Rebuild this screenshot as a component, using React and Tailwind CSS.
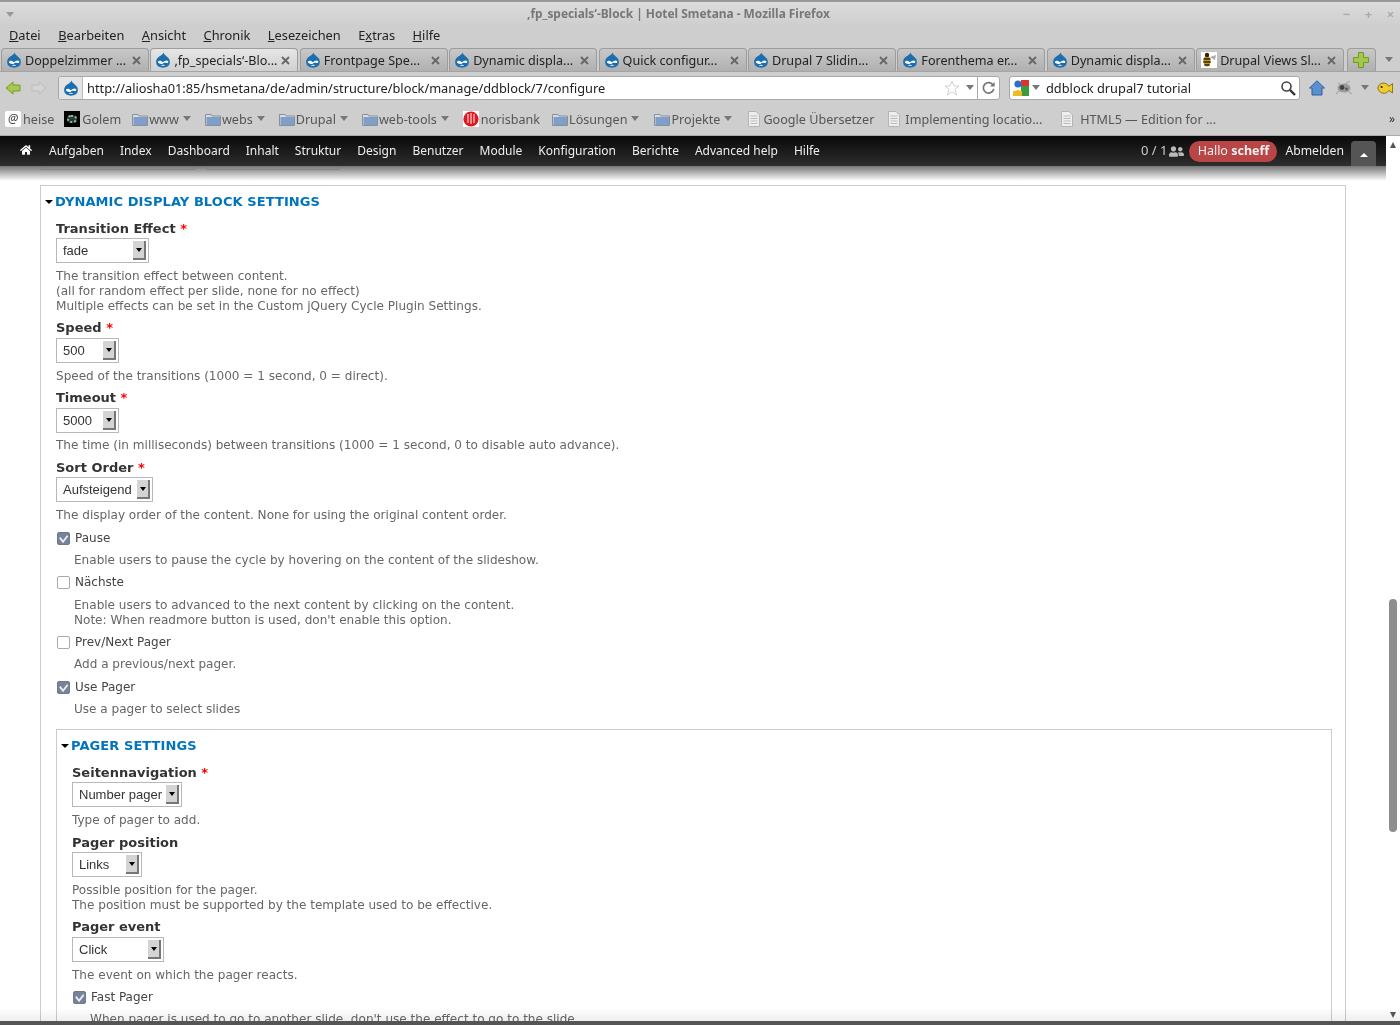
import { FaHome, FaUserFriends } from "react-icons/fa";

const Drop = ({ className = "" }) => (
  <svg viewBox="0 0 16 16" className={`w-4 h-4 shrink-0 ${className}`}>
    <path d="M8.6 0.5C9 3 12 4 13.8 6.6C15.6 9.2 15 13 12.4 14.6C10 16.1 6 16.1 3.6 14.6C1 13 .4 9.4 2 6.8C3.8 4 7.6 3.4 8.6 .5Z" fill="#1b6fb0" />
    <path d="M3 9.6C4.6 8 6.4 9 8 10.2C9.6 9 11.6 7.6 13.2 9.2C13.6 10.6 12.6 11 11.6 11C10 11 9.4 10.4 8 11.4C6.6 12.6 5 11.6 3.8 11.2C3 10.8 2.8 10.2 3 9.6Z" fill="#fff" />
    <path d="M5.8 13.2C7 12.5 9 12.5 10.2 13.2C9 13.9 7 13.9 5.8 13.2Z" fill="#fff" />
  </svg>
);

const Bee = () => (
  <div className="w-4 h-4 shrink-0 bg-white">
    <svg viewBox="0 0 16 16" className="w-4 h-4">
      <ellipse cx="6" cy="9" rx="3.6" ry="5.6" fill="#c99a1c" />
      <path d="M2.6 7H9.4M2.4 10H9.6M3.4 13H8.6" stroke="#2b2410" strokeWidth="1.4" />
      <circle cx="6" cy="3" r="2.2" fill="#2b2410" />
      <path d="M9 5L15 3L14 8Z" fill="#aaa" />
    </svg>
  </div>
);

const Folder = () => (
  <svg viewBox="0 0 16 16" className="w-4 h-4 shrink-0">
    <path d="M.5 3.5H6L7 5H15.5V14.5H.5Z" fill="#d8dde4" stroke="#8a8f96" />
    <rect x="1.5" y="6" width="13.5" height="8" fill="#7d9fc9" />
  </svg>
);

const Page = () => (
  <svg viewBox="0 0 16 16" className="w-4 h-4 shrink-0">
    <path d="M2.5 .5H10L13.5 4V15.5H2.5Z" fill="#eee" stroke="#b4b4b4" />
    <path d="M4.5 5H11.5M4.5 7.5H11.5M4.5 10H11.5M4.5 12.5H11.5" stroke="#bcbcbc" />
  </svg>
);

const Caret = ({ className = "" }) => (
  <span className={`w-0 h-0 border-x-[4px] border-x-transparent border-t-[5px] border-t-[#777] ${className}`} />
);

const tabs = [
  { title: "Doppelzimmer ..." },
  { title: ",fp_specials‘-Blo...", active: true },
  { title: "Frontpage Spe..." },
  { title: "Dynamic displa..." },
  { title: "Quick configur..." },
  { title: "Drupal 7 Slidin..." },
  { title: "Forenthema er..." },
  { title: "Dynamic displa..." },
  { title: "Drupal Views Sl...", bee: true },
];

const menus = [
  ["", "D", "atei"],
  ["", "B", "earbeiten"],
  ["", "A", "nsicht"],
  ["", "C", "hronik"],
  ["", "L", "esezeichen"],
  ["E", "x", "tras"],
  ["", "H", "ilfe"],
];

const adminLinks = ["Aufgaben", "Index", "Dashboard", "Inhalt", "Struktur", "Design", "Benutzer", "Module", "Konfiguration", "Berichte", "Advanced help", "Hilfe"];

const Bookmark = ({ icon, label, arrow, className = "" }) => (
  <div className={`flex items-center ${className}`}>
    {icon}
    <span className="pt-[2px]">{label}</span>
    {arrow && <Caret className="ml-[3px]" />}
  </div>
);

const Req = () => <span className="text-[#f00] font-bold"> *</span>;

const Select = ({ value, width }) => (
  <div className={`h-[25px] border border-[#b8b8b8] bg-white flex items-center justify-between pl-[6px] pr-[2px] font-['Liberation_Sans',sans-serif] text-[13px] text-[#333] ${width}`}>
    <span>{value}</span>
    <div className="w-[13px] h-[19px] bg-[#d4d4d4] border-r-2 border-b-2 border-[#777] flex items-center justify-center">
      <span className="w-0 h-0 border-x-[3.5px] border-x-transparent border-t-[4px] border-t-black" />
    </div>
  </div>
);

const Field = ({ label, required, value, width, desc, className = "", selectGap = "mt-0", descGap = "mt-[6px]" }) => (
  <div className={className}>
    <div className="h-[20px] leading-[22px] font-bold text-[13px] text-[#333]">
      {label}
      {required && <Req />}
    </div>
    <div className={selectGap}>
      <Select value={value} width={width} />
    </div>
    <div className={`${descGap} leading-[15px]`}>
      {desc.map((line) => (
        <div key={line}>{line}</div>
      ))}
    </div>
  </div>
);

const Check = ({ label, checked, desc, className = "", descGap = "mt-[7px]" }) => (
  <div className={className}>
    <div className="flex items-start h-[16px] gap-[5px] pl-px">
      <div className={`mt-[2px] w-[13px] h-[13px] rounded-[2px] border flex items-center justify-center ${checked ? "bg-[#78839a] border-[#6f7a8e]" : "bg-white border-[#aaa]"}`}>
        {checked && (
          <svg viewBox="0 0 12 12" className="w-3 h-3">
            <path d="M2 4.5L5.5 9L10.5 2.5" fill="none" stroke="#eeeeee" strokeWidth="2" />
          </svg>
        )}
      </div>
      <span className="text-[#444] text-[12px] leading-[16px]">{label}</span>
    </div>
    <div className={`pl-[18px] ${descGap} leading-[15px]`}>
      {desc.map((line) => (
        <div key={line}>{line}</div>
      ))}
    </div>
  </div>
);

const Legend = ({ children, className = "" }) => (
  <div className={`flex items-center gap-[2px] font-bold text-[#0074bd] text-[13px] tracking-[0.08px] uppercase ${className}`}>
    <span className="w-0 h-0 border-x-[4px] border-x-transparent border-t-[4px] border-t-black" />
    {children}
  </div>
);

export default function App() {
  return (
    <div className="w-[1400px] h-[1025px] flex flex-col overflow-hidden bg-white font-['Noto_Sans',sans-serif]">
      <div className="bg-[#cecece] shrink-0">
        {/* title bar */}
        <div className="h-[26px] border-t-2 border-[#999] bg-gradient-to-b from-[#dcdcdc] to-[#cecece] flex items-center relative">
          <span className="ml-[6px] w-0 h-0 border-x-[4px] border-x-transparent border-t-[5px] border-t-[#999]" />
          <span className="ml-[513px] text-[11.9px] font-bold text-[#777]">,fp_specials‘-Block | Hotel Smetana - Mozilla Firefox</span>
          <div className="ml-auto mr-[5px] flex gap-[13px] text-[#aaa] text-[13px] font-bold leading-none">
            <span className="w-[9px] text-center">−</span>
            <span className="w-[9px] text-center">+</span>
            <span className="w-[9px] text-center">×</span>
          </div>
        </div>

        {/* menu */}
        <div className="h-[20px] flex items-center pl-[9px] gap-[17.5px] text-[12.8px] text-[#222]">
          {menus.map(([before, key, after]) => (
            <span key={key + after}>
              {before}
              <span className="underline">{key}</span>
              {after}
            </span>
          ))}
        </div>

        {/* tabs */}
        <div className="h-[24px] mt-[2px] flex items-end pl-px border-b border-[#a4a4a4]">
          {tabs.map((tab, i) => (
            <div
              key={i}
              className={`w-[148px] mr-[1.4px] h-[23px] flex items-center pl-[4px] pr-[7px] gap-[3px] rounded-t-[4px] border border-b-0 border-[#9c9c9c] text-[12.6px] text-[#222] ${tab.active ? "bg-gradient-to-b from-[#e6e6e6] to-[#d0d0d0]" : "bg-gradient-to-b from-[#c8c8c8] to-[#b0b0b0]"}`}
            >
              {tab.bee ? <Bee /> : <Drop />}
              <span className="flex-1 whitespace-nowrap pt-[2px]">{tab.title}</span>
              <svg viewBox="0 0 9 9" className="w-[9px] h-[9px] shrink-0">
                <path d="M1 1L8 8M8 1L1 8" stroke="#666" strokeWidth="1.8" />
              </svg>
            </div>
          ))}
          <div className="w-[29px] h-[23px] ml-px flex items-center justify-center rounded-t-[4px] border border-b-0 border-[#9c9c9c] bg-gradient-to-b from-[#c8c8c8] to-[#b0b0b0]">
            <svg viewBox="0 0 16 16" className="w-4 h-4">
              <path d="M5.5 .5H10.5V5.5H15.5V10.5H10.5V15.5H5.5V10.5H.5V5.5H5.5Z" fill="#a3c94a" stroke="#6f9a22" />
            </svg>
          </div>
          <Caret className="ml-[9px] mb-[9px]" />
        </div>

        {/* nav bar */}
        <div className="h-[30px] flex items-center bg-[#cecece] pt-px">
          <svg viewBox="0 0 16 16" className="w-4 h-4 ml-[5px]">
            <path d="M1 8L8 2V5H15V11H8V14Z" fill="#a8c84c" stroke="#7a9a2a" />
          </svg>
          <svg viewBox="0 0 16 16" className="w-4 h-4 ml-[10px]">
            <path d="M15 8L8 2V5H1V11H8V14Z" fill="#d4d4d4" stroke="#bcbcbc" />
          </svg>
          <div className="ml-[11px] w-[942px] h-[24px] flex items-center bg-white border border-[#a8a8a8] rounded-[3px] text-[12.8px] text-[#222]">
            <div className="w-[24px] h-full flex items-center justify-center bg-[#e4e4e4] border-r border-[#bbb] rounded-l-[3px]">
              <Drop />
            </div>
            <span className="ml-[4px] pt-[2px]">http://aliosha01:85/hsmetana/de/admin/structure/block/manage/ddblock/7/configure</span>
            <svg viewBox="0 0 16 16" className="w-4 h-4 ml-auto">
              <path d="M8 1L10 6H15L11 9.4L12.6 15L8 11.6L3.4 15L5 9.4L1 6H6Z" fill="#fff" stroke="#d0d0d0" />
            </svg>
            <Caret className="ml-[6px]" />
            <div className="ml-[3px] w-[22px] h-full border-l border-[#aaa] flex items-center justify-center">
              <svg viewBox="0 0 16 16" className="w-[15px] h-[15px]">
                <path d="M13 5.6A5.6 5.6 0 1 0 13.6 9.5" fill="none" stroke="#777" strokeWidth="1.8" />
                <path d="M14.6 2V7H9.6Z" fill="#777" />
              </svg>
            </div>
          </div>
          <div className="ml-[9px] w-[291px] h-[24px] flex items-center bg-white border border-[#a8a8a8] rounded-[3px] text-[12.8px] text-[#222] pl-[3px] pr-[3px]">
            <svg viewBox="0 0 16 16" className="w-4 h-4">
              <rect x="0" y="0" width="16" height="16" fill="#fff" />
              <path d="M8 0H16V6H8Z" fill="#d9352a" />
              <path d="M8 6H16V16H8Z" fill="#3a9b3f" />
              <path d="M0 11H9V16H0Z" fill="#eebb22" />
              <circle cx="5" cy="4" r="3.6" fill="#2f6fc9" />
              <circle cx="5" cy="13" r="3" fill="#eebb22" />
            </svg>
            <Caret className="ml-[3px]" />
            <span className="ml-[6px] pt-[2px]">ddblock drupal7 tutorial</span>
            <svg viewBox="0 0 16 16" className="w-4 h-4 ml-auto">
              <circle cx="6.5" cy="6.5" r="4.5" fill="#fff" stroke="#444" strokeWidth="1.6" />
              <path d="M10 10L15 15" stroke="#333" strokeWidth="2.4" />
            </svg>
          </div>
          <svg viewBox="0 0 16 16" className="w-4 h-4 ml-[9px]">
            <path d="M8 .8L15.5 8H13V15H3V8H.5Z" fill="#5a8fd0" stroke="#2f5f9e" />
          </svg>
          <svg viewBox="0 0 16 16" className="w-4 h-4 ml-[11px]">
            <ellipse cx="8" cy="8" rx="6.5" ry="4.6" fill="#9a9a9a" />
            <circle cx="6" cy="7.5" r="2.4" fill="#444" />
            <circle cx="10.5" cy="9" r="1.4" fill="#555" />
            <path d="M9 4L14 1M12 11L16 14M3 11L0 14M2 3L5 5" stroke="#aaa" strokeWidth="1.3" />
          </svg>
          <Caret className="ml-[9px]" />
          <svg viewBox="0 0 16 16" className="w-4 h-4 ml-[8px]">
            <path d="M.8 8C2 2 9.5 1.6 11.8 6.4L15.6 3.6V13L11.8 10.4C9.5 15 2 14 .8 8Z" fill="#f0cd2c" stroke="#8a7310" />
            <circle cx="4.6" cy="7" r="1.1" fill="#222" />
          </svg>
        </div>

        {/* bookmarks */}
        <div className="h-[34px] flex items-center pl-[5px] text-[12.6px] text-[#555] border-b border-[#aaa] pt-px">
          <Bookmark
            className="gap-[2px]"
            label="heise"
            icon={
              <div className="w-4 h-4 bg-white flex items-center justify-center italic text-[12px] leading-none text-[#444] rounded-[2px]">@</div>
            }
          />
          <Bookmark
            className="ml-[10px] gap-[2px]"
            label="Golem"
            icon={
              <div className="w-4 h-4 bg-black flex items-center justify-center">
                <div className="w-[10px] h-[8px] rounded-full border-2 border-dotted border-[#6fc9a0] bg-[#333]" />
              </div>
            }
          />
          <Bookmark className="ml-[11px] gap-px" label="www" arrow icon={<Folder />} />
          <Bookmark className="ml-[14px] gap-px" label="webs" arrow icon={<Folder />} />
          <Bookmark className="ml-[14px] gap-px" label="Drupal" arrow icon={<Folder />} />
          <Bookmark className="ml-[14px] gap-px" label="web-tools" arrow icon={<Folder />} />
          <Bookmark
            className="ml-[14px] gap-[2px]"
            label="norisbank"
            icon={
              <div className="w-4 h-4 bg-white">
                <svg viewBox="0 0 16 16" className="w-4 h-4">
                  <circle cx="8" cy="8" r="7.6" fill="#e0181e" />
                  <path d="M5 3V12M8 2V13M11 3V12" stroke="#fff" strokeWidth="1" />
                </svg>
              </div>
            }
          />
          <Bookmark className="ml-[12px] gap-px" label="Lösungen" arrow icon={<Folder />} />
          <Bookmark className="ml-[15px] gap-px" label="Projekte" arrow icon={<Folder />} />
          <Bookmark className="ml-[14px] gap-px" label="Google Übersetzer" icon={<Page />} />
          <Bookmark className="ml-[12px] gap-[3px]" label="Implementing locatio..." icon={<Page />} />
          <Bookmark className="ml-[17px] gap-[5px]" label="HTML5 — Edition for ..." icon={<Page />} />
          <span className="ml-auto mr-[5px] text-[#333] text-[12px]">»</span>
        </div>
      </div>

      <div className="flex-1 min-h-0 flex">
        <div className="flex-1 min-w-0 flex flex-col">
          {/* admin toolbar */}
          <div className="h-[30px] shrink-0 flex bg-gradient-to-b from-[#0a0a0a] to-[#2e2e2e] text-[#eee] text-[12px] pl-[20px] pr-[10px] pt-[5px]">
            <FaHome className="w-[12px] h-[12px] text-white mt-[3px]" />
            <div className="ml-[17px] flex gap-[16px] h-[20px] items-center">
              {adminLinks.map((link, i) => (
                <span key={i}>{link}</span>
              ))}
            </div>
            <div className="ml-auto flex h-[25px] items-start">
              <div className="flex items-center h-[20px] text-[13px]">
                <span className="text-[#ccc]">0 / 1</span>
                <FaUserFriends className="ml-[2px] w-[15px] h-[15px] text-[#bbb]" />
              </div>
              <div className="ml-[5px] h-[21px] w-[88px] justify-center rounded-full bg-[#b84646] flex items-center whitespace-pre text-[12.5px]">
                Hallo <b>scheff</b>
              </div>
              <span className="ml-[8px] h-[20px] flex items-center text-[12.2px]">Abmelden</span>
              <div className="ml-[7px] w-[25px] h-[25px] bg-[#555] rounded-t-[4px] flex items-center justify-center">
                <span className="w-0 h-0 mt-[3px] border-x-[4px] border-x-transparent border-b-[4px] border-b-white" />
              </div>
            </div>
          </div>

          {/* page content */}
          <div className="flex-1 min-h-0 relative overflow-hidden px-[40px] font-['DejaVu_Sans',sans-serif] text-[12.05px] text-[#666]">
            <div className="flex gap-[11px] h-[4px] mb-[15px]">
              <div className="w-[155px] border border-t-0 border-[#bbb]" />
              <div className="w-[134px] border border-t-0 border-[#bbb]" />
            </div>

            <div className="border border-[#ccc] pl-[15px] pr-[13px] pt-[7px]">
              <Legend className="-ml-[11px] h-[18px]">Dynamic display block settings</Legend>
              <Field className="mt-[7px]" label="Transition Effect" required value="fade" width="w-[93px]" desc={["The transition effect between content.", "(all for random effect per slide, none for no effect)", "Multiple effects can be set in the Custom jQuery Cycle Plugin Settings."]} />
              <Field className="mt-[3px]" selectGap="mt-px" label="Speed" required value="500" width="w-[63px]" desc={["Speed of the transitions (1000 = 1 second, 0 = direct)."]} />
              <Field className="mt-[3px]" selectGap="mt-px" descGap="mt-[5px]" label="Timeout" required value="5000" width="w-[63px]" desc={["The time (in milliseconds) between transitions (1000 = 1 second, 0 to disable auto advance)."]} />
              <Field className="mt-[4px]" label="Sort Order" required value="Aufsteigend" width="w-[97px]" desc={["The display order of the content. None for using the original content order."]} />
              <Check className="mt-[7px]" label="Pause" checked desc={["Enable users to pause the cycle by hovering on the content of the slideshow."]} />
              <Check className="mt-[6px]" descGap="mt-[8px]" label="Nächste" desc={["Enable users to advanced to the next content by clicking on the content.", "Note: When readmore button is used, don't enable this option."]} />
              <Check className="mt-[6px]" label="Prev/Next Pager" desc={["Add a previous/next pager."]} />
              <Check className="mt-[7px]" label="Use Pager" checked desc={["Use a pager to select slides"]} />

              <div className="mt-[12px] h-[400px] border border-[#ccc] pl-[15px] pt-[7px]">
                <Legend className="-ml-[11px] h-[18px]">Pager settings</Legend>
                <Field className="mt-[7px]" label="Seitennavigation" required value="Number pager" width="w-[110px]" desc={["Type of pager to add."]} />
                <Field className="mt-[4px]" label="Pager position" value="Links" width="w-[70px]" desc={["Possible position for the pager.", "The position must be supported by the template used to be effective."]} />
                <Field className="mt-[3px]" selectGap="mt-px" label="Pager event" value="Click" width="w-[92px]" desc={["The event on which the pager reacts."]} />
                <Check className="mt-[6px]" label="Fast Pager" checked desc={["When pager is used to go to another slide, don't use the effect to go to the slide."]} />
              </div>
            </div>

            <div className="absolute left-0 right-0 top-0 h-[15px] bg-gradient-to-b from-[#777] to-transparent" />
            <div className="absolute left-0 right-0 bottom-0 h-[13px] bg-gradient-to-b from-white to-[#eeeeee] mix-blend-multiply" />
          </div>
        </div>

        {/* scrollbar */}
        <div className="w-[14px] shrink-0 flex flex-col items-center bg-white relative">
          <span className="mt-[6px] w-0 h-0 border-x-[3.5px] border-x-transparent border-b-[6px] border-b-[#555]" />
          <div className="mt-[451px] w-[8px] h-[233px] rounded-[4px] bg-[#8e8e8e]" />
          <div className="absolute left-0 right-0 bottom-0 h-[13px] bg-gradient-to-b from-transparent to-[#eeeeee]" />
          <span className="relative mt-auto mb-[3px] w-0 h-0 border-x-[3.5px] border-x-transparent border-t-[6px] border-t-[#555]" />
        </div>
      </div>

      <div className="h-[4px] shrink-0 bg-[#555]" />
    </div>
  );
}
